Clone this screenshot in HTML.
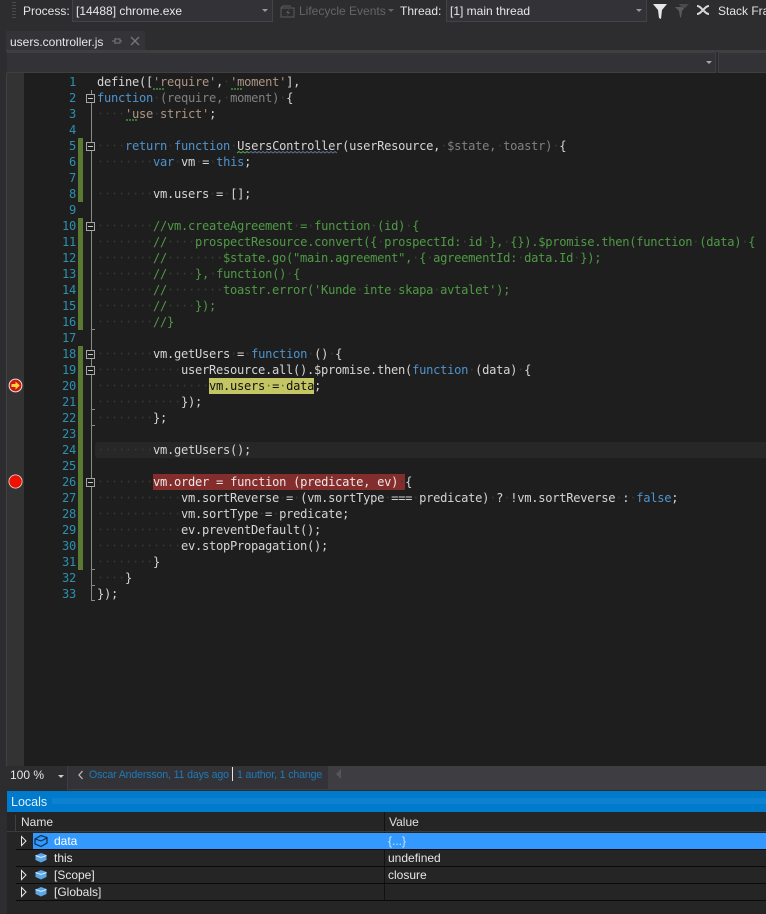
<!DOCTYPE html>
<html style="height:914px;overflow:hidden"><head><meta charset="utf-8"><style>
html,body{margin:0;padding:0;background:#2d2d30}
body{width:766px;height:914px;position:relative;overflow:hidden;font-family:"Liberation Sans",sans-serif;font-size:12px;color:#e0e0e0}
.a{position:absolute}
.t{position:absolute;white-space:nowrap;line-height:16px}
#code{position:absolute;left:97px;top:74px;margin:0;font:12.1px/16px "DejaVu Sans Mono","Liberation Mono",monospace;letter-spacing:-.28px;color:#d4d4d4}
#code div{height:16px;white-space:pre}
#nums{position:absolute;left:40px;width:36px;top:74px;text-align:right;font:12.1px/16px "DejaVu Sans Mono",monospace;letter-spacing:-.28px;color:#2b91af}
#nums div{height:16px}
i{font-style:normal;color:#373737}
em{font-style:normal;color:#4f93cc}
u{text-decoration:none;color:#4f9a45}
u i{color:#343f33}
q{quotes:none;color:#ad9585}
q:before,q:after{content:none}
small{font-size:inherit;color:#808080}
.box{position:absolute;left:86px;width:7px;height:7px;border:1px solid #a5a5a5;background:#1e1e1e}
.box:after{content:"";position:absolute;left:1px;right:1px;top:3px;height:1px;background:#c8c8c8}
.tick{position:absolute;left:91px;width:4px;height:1px;background:#8a8a8a}
.sep{position:absolute;left:16px;right:0;height:1px;background:#0a0a0a}
</style></head><body>
<!-- toolbar -->
<div class="a" style="left:0;top:0;width:766px;height:23px;background:#2d2d30"></div>
<div class="a" style="left:12px;top:2px;width:4px;height:17px;background:repeating-linear-gradient(#4a4a4d 0 1px,transparent 1px 3px)"></div>
<div class="t" style="left:23px;top:3px;color:#e4e4e4">Process:</div>
<div class="a" style="left:72px;top:0;width:199px;height:21px;background:#333337;border:1px solid #434346;border-top:0"></div>
<div class="t" style="left:76px;top:3px;color:#e8e8e8">[14488] chrome.exe</div>
<svg class="a" style="left:262px;top:9px" width="7" height="4"><path d="M0 0h6L3 3z" fill="#999"/></svg>
<svg class="a" style="left:280px;top:4px" width="15" height="15"><path d="M1 4h13v9H1zM1 4l2-2h8" fill="none" stroke="#5a5a5d"/><path d="M9 5L6 9h2l-1 3 3-4H8z" fill="#5a5a5d"/></svg>
<div class="t" style="left:299px;top:3px;color:#656567">Lifecycle Events</div>
<svg class="a" style="left:388px;top:9px" width="7" height="4"><path d="M0 0h6L3 3z" fill="#666"/></svg>
<div class="t" style="left:400px;top:3px;color:#e4e4e4">Thread:</div>
<div class="a" style="left:446px;top:0;width:199px;height:21px;background:#333337;border:1px solid #434346;border-top:0"></div>
<div class="t" style="left:450px;top:3px;color:#e8e8e8">[1] main thread</div>
<svg class="a" style="left:636px;top:9px" width="7" height="4"><path d="M0 0h6L3 3z" fill="#999"/></svg>
<svg class="a" style="left:652px;top:3px" width="16" height="16"><path d="M1 1h14L10 7l-1 9-2-1-1-8z" fill="#e6e6e6"/></svg>
<svg class="a" style="left:674px;top:3px" width="16" height="16"><path d="M1 4h10L8 8l-1 7-1-1-1-6z" fill="#5a5a5c"/><path d="M5 1h10l-4 4H8z" fill="#4a4a4c"/></svg>
<svg class="a" style="left:696px;top:3px" width="15" height="14"><path d="M1 3c2 0 3 1 6 4s4 4 6 4M13 3c-2 0-3 1-6 4s-4 4-6 4" fill="none" stroke="#d8d8d8" stroke-width="2"/></svg>
<div class="t" style="left:718px;top:3px;color:#e4e4e4">Stack Frame:</div>

<!-- tab -->
<div class="a" style="left:6px;top:31px;width:139px;height:20px;background:#343438"></div>
<div class="t" style="left:10px;top:34px;color:#e6e6e6">users.controller.js</div>
<svg class="a" style="left:112px;top:36px" width="10" height="9"><path d="M0 5h3M3 2v6M3 3h5v4H3M8 5h2" fill="none" stroke="#77777a"/></svg>
<svg class="a" style="left:130px;top:36px" width="10" height="10"><path d="M1 1l8 8M9 1l-8 8" stroke="#77777a" stroke-width="1.3"/></svg>
<div class="a" style="left:6px;top:50px;width:760px;height:2px;background:#3f3f42"></div>

<!-- nav bar -->
<div class="a" style="left:7px;top:52px;width:759px;height:21px;background:#2d2d30"></div>
<div class="a" style="left:7px;top:52px;width:708px;height:19px;background:#333337;border:1px solid #3f3f42;border-left:0"></div>
<div class="a" style="left:718px;top:52px;width:48px;height:19px;background:#333337;border:1px solid #3f3f42;border-right:0"></div>
<svg class="a" style="left:706px;top:61px" width="7" height="4"><path d="M0 0h6L3 3z" fill="#a8a8a8"/></svg>

<!-- editor -->
<div class="a" style="left:7px;top:73px;width:759px;height:693px;background:#1e1e1e"></div>
<div class="a" style="left:7px;top:73px;width:17px;height:693px;background:#333333"></div>
<div class="a" style="left:6px;top:73px;width:1px;height:693px;background:#404042"></div>

<!-- current line -->
<div class="a" style="left:95px;top:442px;width:671px;height:16px;border-radius:3px 0 0 3px;background:#272728"></div>
<!-- highlights -->
<div class="a" style="left:209px;top:378px;width:105px;height:16px;background:#c4c663"></div>
<div class="a" style="left:153px;top:474px;width:252px;height:16px;background:#842d2d"></div>

<!-- change bars -->
<div class="a" style="left:78px;top:138px;width:5px;height:64px;background:#5a7a33"></div>
<div class="a" style="left:78px;top:218px;width:5px;height:112px;background:#5a7a33"></div>
<div class="a" style="left:78px;top:346px;width:5px;height:224px;background:#5a7a33"></div>

<!-- outline -->
<div class="a" style="left:91px;top:90px;width:1px;height:510px;background:#8a8a8a"></div>
<div class="box" style="top:94px"></div>
<div class="box" style="top:142px"></div>
<div class="box" style="top:222px"></div>
<div class="box" style="top:350px"></div>
<div class="box" style="top:366px"></div>
<div class="box" style="top:478px"></div>
<div class="tick" style="top:329px"></div>
<div class="tick" style="top:409px"></div>
<div class="tick" style="top:425px"></div>
<div class="tick" style="top:569px"></div>
<div class="tick" style="top:585px"></div>
<div class="tick" style="top:600px"></div>

<!-- breakpoints -->
<svg class="a" style="left:8px;top:378px" width="15" height="15"><circle cx="7.5" cy="7.5" r="6.4" fill="#d01a10" stroke="#f0dcdc" stroke-width="1"/><path d="M3.5 6h4V3.5L11.8 7.5 7.5 11.500V9h-4z" fill="#f5d63d"/></svg>
<svg class="a" style="left:8px;top:474px" width="15" height="15"><circle cx="7.500" cy="7.500" r="6.600" fill="#ee1100" stroke="#f3d5d2" stroke-width=".8"/></svg>

<div id="nums"><div>1</div><div>2</div><div>3</div><div>4</div><div>5</div><div>6</div><div>7</div><div>8</div><div>9</div><div>10</div><div>11</div><div>12</div><div>13</div><div>14</div><div>15</div><div>16</div><div>17</div><div>18</div><div>19</div><div>20</div><div>21</div><div>22</div><div>23</div><div>24</div><div>25</div><div>26</div><div>27</div><div>28</div><div>29</div><div>30</div><div>31</div><div>32</div><div>33</div></div>

<div id="code"><div>define([<q>'require'</q>,<i>·</i><q>'moment'</q>],</div>
<div><em>function</em><i>·</i><small>(require,</small><i>·</i><small>moment)</small><i>·</i>{</div>
<div><i>····</i><q>'use</q><i>·</i><q>strict'</q>;</div>
<div></div>
<div><i>····</i><em>return</em><i>·</i><em>function</em><i>·</i>UsersController(userResource,<i>·</i><small>$state,</small><i>·</i><small>toastr)</small><i>·</i>{</div>
<div><i>········</i><em>var</em><i>·</i>vm<i>·</i>=<i>·</i><em>this</em>;</div>
<div></div>
<div><i>········</i>vm.users<i>·</i>=<i>·</i>[];</div>
<div></div>
<div><i>········</i><u>//vm.createAgreement<i>·</i>=<i>·</i>function<i>·</i>(id)<i>·</i>{</u></div>
<div><i>········</i><u>//<i>····</i>prospectResource.convert({<i>·</i>prospectId:<i>·</i>id<i>·</i>},<i>·</i>{}).$promise.then(function<i>·</i>(data)<i>·</i>{</u></div>
<div><i>········</i><u>//<i>········</i>$state.go("main.agreement",<i>·</i>{<i>·</i>agreementId:<i>·</i>data.Id<i>·</i>});</u></div>
<div><i>········</i><u>//<i>····</i>},<i>·</i>function()<i>·</i>{</u></div>
<div><i>········</i><u>//<i>········</i>toastr.error('Kunde<i>·</i>inte<i>·</i>skapa<i>·</i>avtalet');</u></div>
<div><i>········</i><u>//<i>····</i>});</u></div>
<div><i>········</i><u>//}</u></div>
<div></div>
<div><i>········</i>vm.getUsers<i>·</i>=<i>·</i><em>function</em><i>·</i>()<i>·</i>{</div>
<div><i>············</i>userResource.all().$promise.then(<em>function</em><i>·</i>(data)<i>·</i>{</div>
<div><i>················</i><span style="color:#111">vm.users<i style="color:#6c6e30">·</i>=<i style="color:#6c6e30">·</i>data</span>;</div>
<div><i>············</i>});</div>
<div><i>········</i>};</div>
<div></div>
<div><i>········</i>vm.getUsers();</div>
<div></div>
<div><i>········</i><span style="color:#f0e6e6">vm.order<i style="color:#a86a6a"> </i>=<i style="color:#a86a6a"> </i>function<i style="color:#a86a6a"> </i>(predicate,<i style="color:#a86a6a"> </i>ev)</span><i>·</i>{</div>
<div><i>············</i>vm.sortReverse<i>·</i>=<i>·</i>(vm.sortType<i>·</i>===<i>·</i>predicate)<i>·</i>?<i>·</i>!vm.sortReverse<i>·</i>:<i>·</i><em>false</em>;</div>
<div><i>············</i>vm.sortType<i>·</i>=<i>·</i>predicate;</div>
<div><i>············</i>ev.preventDefault();</div>
<div><i>············</i>ev.stopPropagation();</div>
<div><i>········</i>}</div>
<div><i>····</i>}</div>
<div>});</div></div>

<!-- squiggles -->
<svg class="a" style="left:97px;top:80px" width="300" height="80">
<path d="M56 9h12M134 9h12M29 40h11" stroke="#4ea64a" stroke-width="1.2" stroke-dasharray="2 1" fill="none"/>
<path d="M140 73l2-1.500 2 1.500 2-1.500 2 1.500 2-1.500 2 1.500" stroke="#4ea64a" fill="none"/>
<path d="M152 73l2-1.500 2 1.500 2-1.500 2 1.500 2-1.500 2 1.500 2-1.500 2 1.500 2-1.500 2 1.500 2-1.500 2 1.500 2-1.500 2 1.500 2-1.500 2 1.500 2-1.500 2 1.500 2-1.500 2 1.500 2-1.500 2 1.500 2-1.500 2 1.500 2-1.500 2 1.500 2-1.500 2 1.500 2-1.500 2 1.500 2-1.500 2 1.500 2-1.500 2 1.500 2-1.500 2 1.500 2-1.500 2 1.500 2-1.500 2 1.500 2-1.500 2 1.500 2-1.500 2 1.500" stroke="#5e6f8c" fill="none"/>
</svg>

<!-- status strip -->
<div class="a" style="left:7px;top:766px;width:759px;height:24px;background:#3e3e42"></div>
<div class="a" style="left:7px;top:766px;width:60px;height:24px;background:#2d2d30"></div>
<div class="t" style="left:10px;top:767px;font-size:12px;color:#e6e6e6">100 %</div>
<svg class="a" style="left:58px;top:775px" width="7" height="4"><path d="M0 0h6L3 3z" fill="#ccc"/></svg>
<div class="a" style="left:68px;top:766px;width:260px;height:23px;background:#333337"></div>
<svg class="a" style="left:78px;top:770px" width="6" height="10"><path d="M4.500 1L1 5l3.500 4" fill="none" stroke="#b8b8b8" stroke-width="1.300"/></svg>
<div class="t" style="left:89px;top:767px;font-size:10.600px;letter-spacing:-.15px;color:#1f7ab8">Oscar Andersson, 11 days ago</div>
<div class="a" style="left:232px;top:767px;width:1px;height:14px;background:#e6e6e6"></div>
<div class="t" style="left:237px;top:767px;font-size:10.600px;letter-spacing:-.15px;color:#1f7ab8">1 author, 1 change</div>
<svg class="a" style="left:335px;top:769px" width="7" height="10"><path d="M6 0v10L1 5z" fill="#55555a"/></svg>

<!-- locals -->
<div class="a" style="left:7px;top:791px;width:759px;height:21px;background:#007acc"></div>
<div class="a" style="left:52px;top:798px;width:714px;height:6px;background-image:radial-gradient(circle at 1px 1px,#2f92d4 .7px,transparent .8px);background-size:2px 2px"></div>
<div class="t" style="left:11px;top:794px;color:#dff0fb;font-size:12.500px">Locals</div>
<div class="a" style="left:7px;top:812px;width:759px;height:102px;background:#252526"></div>
<div class="a" style="left:15px;top:815px;width:1px;height:16px;background:#3f3f46"></div>
<div class="a" style="left:384px;top:812px;width:1px;height:89px;background:#111"></div>
<div class="t" style="left:21px;top:814px;color:#e0e0e0">Name</div>
<div class="t" style="left:389px;top:814px;color:#e0e0e0">Value</div>
<div class="a" style="left:7px;top:831px;width:759px;height:1px;background:#3a3a3c"></div>

<div class="a" style="left:33px;top:833px;width:351px;height:16px;background:#3399ff"></div>
<div class="a" style="left:384px;top:833px;width:382px;height:16px;background:#3399ff"></div>
<div class="sep" style="top:849px"></div>
<div class="sep" style="top:866px"></div>
<div class="sep" style="top:883px"></div>
<div class="sep" style="top:900px"></div>

<svg class="a" style="left:20px;top:835px" width="8" height="12"><path d="M1.500 1.500l4.500 4.500-4.500 4.500z" fill="none" stroke="#e6e6e6"/></svg>
<svg class="a" style="left:20px;top:869px" width="8" height="12"><path d="M1.500 1.500l4.500 4.500-4.500 4.500z" fill="none" stroke="#e6e6e6"/></svg>
<svg class="a" style="left:20px;top:886px" width="8" height="12"><path d="M1.500 1.500l4.500 4.500-4.500 4.500z" fill="none" stroke="#e6e6e6"/></svg>

<svg class="a" style="left:33px;top:833px" width="16" height="16"><path d="M2 6l6-3.500 6 2v5.500l-6 3.500-6-2.500z" fill="#3399ff" stroke="#0c2c4c" stroke-width="1.200"/><path d="M2.500 6l5.500 2 6-3" fill="none" stroke="#0c2c4c"/></svg>
<svg class="a" style="left:34px;top:851px" width="14" height="13"><path d="M1.500 4.500L7 2l5.500 2v5L7 11.500 1.500 9z" fill="#5aa6e6"/><path d="M1.500 4.500L7 6.500l5.500-2" fill="none" stroke="#dbeeff"/></svg>
<svg class="a" style="left:34px;top:868px" width="14" height="13"><path d="M1.500 4.500L7 2l5.500 2v5L7 11.500 1.500 9z" fill="#5aa6e6"/><path d="M1.500 4.500L7 6.500l5.500-2" fill="none" stroke="#dbeeff"/></svg>
<svg class="a" style="left:34px;top:885px" width="14" height="13"><path d="M1.500 4.500L7 2l5.500 2v5L7 11.500 1.500 9z" fill="#5aa6e6"/><path d="M1.500 4.500L7 6.500l5.500-2" fill="none" stroke="#dbeeff"/></svg>

<div class="t" style="left:54px;top:833px;color:#fff">data</div>
<div class="t" style="left:388px;top:833px;color:#cfe6ff">{...}</div>
<div class="t" style="left:54px;top:850px;color:#e6e6e6">this</div>
<div class="t" style="left:388px;top:850px;color:#e6e6e6">undefined</div>
<div class="t" style="left:54px;top:867px;color:#e6e6e6">[Scope]</div>
<div class="t" style="left:388px;top:867px;color:#e6e6e6">closure</div>
<div class="t" style="left:54px;top:884px;color:#e6e6e6">[Globals]</div>
</body></html>
